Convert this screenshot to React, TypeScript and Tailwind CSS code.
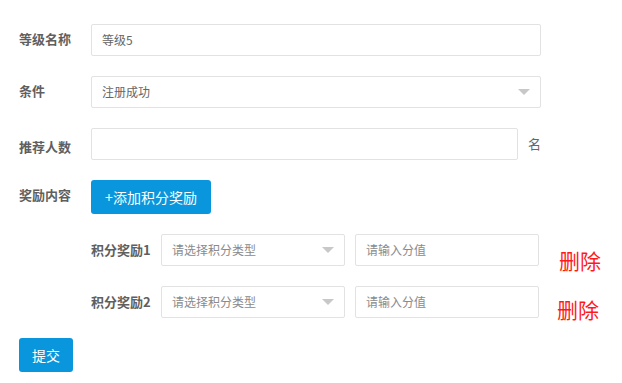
import React from 'react';

const font = { fontFamily: '"Noto Sans CJK SC", "Liberation Sans", sans-serif' };

const Caret = () => (
  <svg width="12" height="6" viewBox="0 0 12 6" className="absolute right-[10px] top-1/2 -translate-y-1/2">
    <path d="M0 0 L12 0 L6 6 Z" fill="#c8c8c8" />
  </svg>
);

const Label = ({ children }: { children: React.ReactNode }) => (
  <div className="w-[72px] shrink-0 pt-[5px] text-[13px] font-bold leading-[20px] text-[#5f5f5f]">{children}</div>
);

const Box = ({ className = '', children }: { className?: string; children?: React.ReactNode }) => (
  <div className={`relative flex h-[32px] items-center rounded-[2px] border border-[#e2e2e2] bg-white px-[10px] text-[12px] ${className}`}>
    {children}
  </div>
);

const rewards = [
  { name: '积分奖励1', del: 'mt-[16px] ml-[20px]' },
  { name: '积分奖励2', del: 'mt-[13px] ml-[18px]' },
];

export default function App() {
  return (
    <div className="min-h-[383px] w-[622px] bg-white pl-[19px] pt-[24px]" style={font}>
      <div className="flex flex-col gap-[20px]">
        <div className="flex">
          <Label>等级名称</Label>
          <Box className="w-[450px] text-[#666]">等级5</Box>
        </div>

        <div className="flex">
          <Label>条件</Label>
          <Box className="w-[450px] text-[#666]">
            注册成功
            <Caret />
          </Box>
        </div>

        <div className="flex items-center">
          <Label>推荐人数</Label>
          <Box className="w-[427px]" />
          <span className="ml-[10px] text-[13px] text-[#666]">名</span>
        </div>

        <div className="flex">
          <Label>奖励内容</Label>
          <button className="h-[34px] w-[120px] rounded-[3px] bg-[#0a96dc] text-[14px] text-white">+添加积分奖励</button>
        </div>

        {rewards.map((r) => (
          <div key={r.name} className="flex h-[32px] items-start pl-[72px]">
            <div className="w-[70px] shrink-0 pt-[6px] text-[13px] font-bold leading-[20px] text-[#5f5f5f]">{r.name}</div>
            <Box className="w-[184px] text-[#8a8a8a]">
              请选择积分类型
              <Caret />
            </Box>
            <Box className="ml-[10px] w-[184px] text-[#8a8a8a]">请输入分值</Box>
            <span className={`text-[21px] leading-[21px] text-[#ff1a1a] ${r.del}`}>删除</span>
          </div>
        ))}

        <div>
          <button className="h-[34px] w-[54px] rounded-[3px] bg-[#0a96dc] text-[14px] text-white">提交</button>
        </div>
      </div>
    </div>
  );
}
